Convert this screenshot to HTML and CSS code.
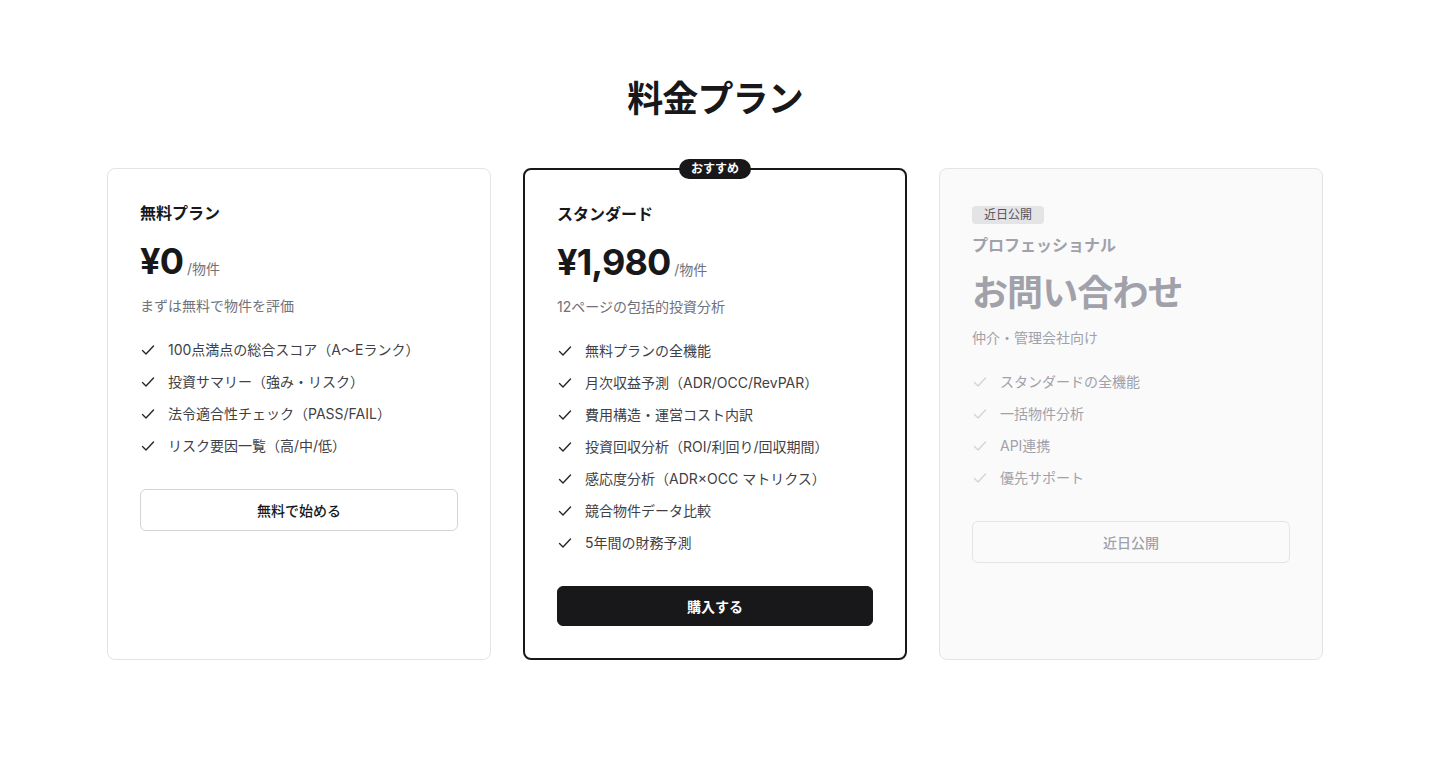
FILE: index.html
```html
<!DOCTYPE html>
<html lang="ja">
<head>
<meta charset="utf-8">
<title>料金プラン</title>
<link rel="stylesheet" href="styles.css">
</head>
<body>
<main class="page">
  <h1 class="heading">料金プラン</h1>
  <div class="plans">
    <section class="card">
      <h2 class="plan-name">無料プラン</h2>
      <div class="price"><span class="amount">¥0</span><span class="unit">/物件</span></div>
      <p class="desc">まずは無料で物件を評価</p>
      <ul class="features">
        <li><svg class="check" viewBox="0 0 16 16"><path d="M2.5 8.5l3.5 3.5 7.5-8"/></svg>100点満点の総合スコア（A〜Eランク）</li>
        <li><svg class="check" viewBox="0 0 16 16"><path d="M2.5 8.5l3.5 3.5 7.5-8"/></svg>投資サマリー（強み・リスク）</li>
        <li><svg class="check" viewBox="0 0 16 16"><path d="M2.5 8.5l3.5 3.5 7.5-8"/></svg>法令適合性チェック（PASS/FAIL）</li>
        <li><svg class="check" viewBox="0 0 16 16"><path d="M2.5 8.5l3.5 3.5 7.5-8"/></svg>リスク要因一覧（高/中/低）</li>
      </ul>
      <button class="btn btn-outline">無料で始める</button>
    </section>
    <section class="card card-featured">
      <span class="ribbon">おすすめ</span>
      <h2 class="plan-name">スタンダード</h2>
      <div class="price"><span class="amount">¥1,980</span><span class="unit">/物件</span></div>
      <p class="desc">12ページの包括的投資分析</p>
      <ul class="features">
        <li><svg class="check" viewBox="0 0 16 16"><path d="M2.5 8.5l3.5 3.5 7.5-8"/></svg>無料プランの全機能</li>
        <li><svg class="check" viewBox="0 0 16 16"><path d="M2.5 8.5l3.5 3.5 7.5-8"/></svg>月次収益予測（ADR/OCC/RevPAR）</li>
        <li><svg class="check" viewBox="0 0 16 16"><path d="M2.5 8.5l3.5 3.5 7.5-8"/></svg>費用構造・運営コスト内訳</li>
        <li><svg class="check" viewBox="0 0 16 16"><path d="M2.5 8.5l3.5 3.5 7.5-8"/></svg>投資回収分析（ROI/利回り/回収期間）</li>
        <li><svg class="check" viewBox="0 0 16 16"><path d="M2.5 8.5l3.5 3.5 7.5-8"/></svg>感応度分析（ADR×OCC マトリクス）</li>
        <li><svg class="check" viewBox="0 0 16 16"><path d="M2.5 8.5l3.5 3.5 7.5-8"/></svg>競合物件データ比較</li>
        <li><svg class="check" viewBox="0 0 16 16"><path d="M2.5 8.5l3.5 3.5 7.5-8"/></svg>5年間の財務予測</li>
      </ul>
      <button class="btn btn-primary">購入する</button>
    </section>
    <section class="card card-muted">
      <span class="tag">近日公開</span>
      <h2 class="plan-name">プロフェッショナル</h2>
      <div class="price"><span class="amount">お問い合わせ</span></div>
      <p class="desc">仲介・管理会社向け</p>
      <ul class="features">
        <li><svg class="check" viewBox="0 0 16 16"><path d="M2.5 8.5l3.5 3.5 7.5-8"/></svg>スタンダードの全機能</li>
        <li><svg class="check" viewBox="0 0 16 16"><path d="M2.5 8.5l3.5 3.5 7.5-8"/></svg>一括物件分析</li>
        <li><svg class="check" viewBox="0 0 16 16"><path d="M2.5 8.5l3.5 3.5 7.5-8"/></svg>API連携</li>
        <li><svg class="check" viewBox="0 0 16 16"><path d="M2.5 8.5l3.5 3.5 7.5-8"/></svg>優先サポート</li>
      </ul>
      <button class="btn btn-disabled" disabled>近日公開</button>
    </section>
  </div>
</main>
</body>
</html>
```
FILE: styles.css
```css
* { box-sizing: border-box; }
html, body { margin: 0; padding: 0; background: #fff; }
body {
  font-family: "Inter", "Noto Sans CJK JP", sans-serif;
  color: #18181b;
}
.page {
  width: 1430px;
  padding-top: 79px;
}
.heading {
  margin: 0 0 49px;
  text-align: center;
  font-size: 36px;
  line-height: 40px;
  font-weight: 700;
  letter-spacing: -0.9px;
  color: #18181b;
}
.plans {
  width: 1216px;
  margin: 0 auto;
  display: grid;
  grid-template-columns: repeat(3, 1fr);
  gap: 32px;
  align-items: stretch;
}
.card {
  position: relative;
  border: 1px solid #e4e4e7;
  border-radius: 8px;
  padding: 32px;
  display: flex;
  flex-direction: column;
  background: #fff;
}
.card-featured {
  border: 2px solid #18181b;
}
.card-muted {
  background: #fafafa;
}
.ribbon {
  position: absolute;
  top: -11px;
  left: 50%;
  transform: translateX(-50%);
  background: #18181b;
  color: #fff;
  font-size: 12px;
  font-weight: 600;
  line-height: 20px;
  padding: 0 12px;
  border-radius: 10px;
}
.tag {
  align-self: flex-start;
  background: #e4e4e7;
  color: #52525b;
  font-size: 12px;
  line-height: 18px;
  padding: 0 12px;
  border-radius: 4px;
  margin: 5px 0 9px;
}
.plan-name {
  margin: 0;
  font-size: 16px;
  line-height: 24px;
  font-weight: 600;
}
.card-muted .plan-name { color: #a1a1aa; }
.price {
  margin-top: 16px;
  display: flex;
  align-items: baseline;
  gap: 4px;
  height: 40px;
  line-height: 40px;
}
.amount {
  font-size: 36px;
  font-weight: 700;
  letter-spacing: -0.9px;
}
.card-muted .amount { color: #a1a1aa; }
.unit {
  font-size: 14px;
  line-height: 20px;
  color: #71717a;
}
.desc {
  margin: 15px 0 0;
  font-size: 14px;
  line-height: 20px;
  color: #71717a;
}
.card-muted .desc { color: #a1a1aa; }
.features {
  list-style: none;
  margin: 24px 0 0;
  padding: 0;
  display: flex;
  flex-direction: column;
  gap: 12px;
}
.features li {
  display: flex;
  align-items: center;
  gap: 12px;
  font-size: 14px;
  line-height: 20px;
  color: #3f3f46;
}
.check {
  width: 16px;
  height: 16px;
  flex: none;
  fill: none;
  stroke: #27272a;
  stroke-width: 1.4;
  stroke-linecap: round;
  stroke-linejoin: round;
}
.card-muted .features li { color: #a1a1aa; }
.card-muted .check { stroke: #d4d4d8; }
.btn {
  margin-top: 33px;
  height: 42px;
  width: 100%;
  border-radius: 6px;
  font-family: inherit;
  font-size: 14px;
  font-weight: 500;
  cursor: pointer;
}
.btn-outline {
  background: #fff;
  border: 1px solid #d4d4d8;
  color: #18181b;
}
.btn-primary {
  height: 40px;
  background: #18181b;
  border: 1px solid #18181b;
  color: #fff;
  font-weight: 600;
}
.btn-disabled {
  background: transparent;
  border: 1px solid #e4e4e7;
  color: #a1a1aa;
  cursor: default;
}
```
